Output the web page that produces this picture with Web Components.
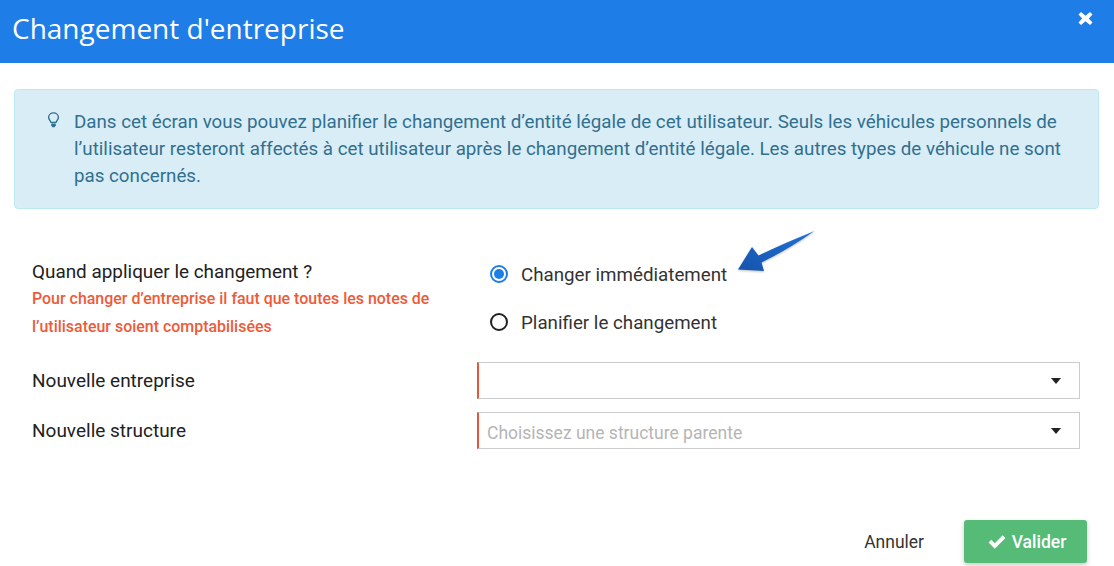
<!DOCTYPE html>
<html lang="fr">
<head>
<meta charset="utf-8">
<title>Changement d'entreprise</title>
<style>
  html, body { margin: 0; padding: 0; background: #fff; }
  body { width: 1114px; height: 566px; overflow: hidden; font-family: Roboto, "Liberation Sans", sans-serif; color: #212121; }
</style>
</head>
<body>
<company-dialog></company-dialog>

<script>
class DialogHeader extends HTMLElement {
	constructor() {
		super();
		this.attachShadow({ mode: "open" }).innerHTML = `
      <style>
        :host { display: flex; justify-content: space-between; height: 63px; background: #1e7de6; color: #fff; box-sizing: border-box; padding: 0 21px 0 12px; }
        h1 { margin: 9px 0 0; font: 400 28px/38px "Open Sans", sans-serif; }
        svg { display: block; margin-top: 11px; }
      </style>
      <h1><slot></slot></h1>
      <svg width="15" height="15" viewBox="0 0 15 15"><path d="M3 1 7.500 4.700 12 1l2.500 2.600-3.700 3.900 3.700 3.900L12 14 7.500 10.300 3 14 .5 11.400l3.700-3.900L.5 3.600z" fill="#fff"/></svg>
`;
	}
}

class InfoAlert extends HTMLElement {
	constructor() {
		super();
		this.attachShadow({ mode: "open" }).innerHTML = `
      <style>
        :host { display: flex; box-sizing: border-box; height: 120px; background: #d9edf7; border: 1px solid #bce8f1; border-radius: 4px; color: #31708f; padding: 19px 24px 0 32px; font: 400 18.75px/27px Roboto, sans-serif; }
        svg { flex: none; margin: 3px 14px 0 0; }
      </style>
      <svg width="13" height="17" viewBox="0 0 13 17" fill="none" stroke="#31708f">
        <path d="M3.900 10.400C3.600 8.600 1.600 7.600 1.600 5.200a4.900 4.300 0 0 1 9.800 0c0 2.400-2 3.400-2.300 5.200z" stroke-width="1.400"/>
        <path d="M4.200 11.400h4.600v2.200l-1.200 1.600H5.400l-1.200-1.600z" fill="#31708f" stroke="none"/>
      </svg>
      <div><slot></slot></div>
`;
	}
}

class RadioOption extends HTMLElement {
	constructor() {
		super();
		const checked = this.hasAttribute("checked");
		this.attachShadow({ mode: "open" }).innerHTML = `
      <style>
        :host { display: flex; align-items: center; height: 24px; font: 400 18.75px/24px Roboto, sans-serif; color: #333; }
        .dot { box-sizing: border-box; width: 18px; height: 18px; border-radius: 50%; border: 2px solid ${checked ? "#1e7de6" : "#212121"}; margin-right: 13px; display: flex; align-items: center; justify-content: center; }
        .dot i { width: 10px; height: 10px; border-radius: 50%; background: #1e7de6; display: ${checked ? "block" : "none"}; }
        span.text { position: relative; top: 1px; }
      </style>
      <span class="dot"><i></i></span>
      <span class="text"><slot></slot></span>
`;
	}
}

class SelectField extends HTMLElement {
	constructor() {
		super();
		this.attachShadow({ mode: "open" }).innerHTML = `
      <style>
        :host { display: flex; align-items: center; justify-content: space-between; box-sizing: border-box; width: 603px; height: 37px; border: 1px solid #ccc; border-left: 2px solid #e2563a; padding: 5px 18px 0 8px; font: 400 17.5px/24px Roboto, sans-serif; color: #b5b5b5; }
        i { width: 0; height: 0; border: 5.500px solid transparent; border-top: 6px solid #212121; border-bottom: 0; margin-top: -5px; }
      </style>
      <span><slot></slot></span>
      <i></i>
`;
	}
}

class CompanyDialog extends HTMLElement {
	constructor() {
		super();
		this.attachShadow({ mode: "open" }).innerHTML = `
      <style>
        :host { display: block; position: relative; height: 566px; }
        info-alert { margin: 26px 15px 0 14px; }
        .when { display: grid; grid-template-columns: 445px 1fr; margin: 50px 0 0 32px; height: 103px; }
        .label { font: 400 19px/24px Roboto, sans-serif; color: #212121; }
        .when .label { padding-top: 1px; font-size: 18.9px; }
        .note { margin: 1px 0 0; font: 500 15.95px/27.5px Roboto, sans-serif; color: #ee5a38; }
        .radios { display: flex; flex-direction: column; gap: 24px; padding: 3px 0 0 13px; }
        .row { display: flex; justify-content: space-between; align-items: center; margin: 0 34px 0 32px; height: 37px; }
        .row + .row { margin-top: 13px; }
        .actions { display: flex; justify-content: flex-end; align-items: center; margin: 71px 27px 0 0; gap: 40px; }
        .cancel { font: 400 17.5px/24px Roboto, sans-serif; color: #333; }
        .ok { display: flex; align-items: center; justify-content: center; gap: 6px; box-sizing: border-box; width: 123px; height: 43px; padding-left: 3px; background: #55bb77; color: #fff; border-radius: 3px; font: 500 17.5px/24px Roboto, sans-serif; box-shadow: 0 2px 5px rgba(0,0,0,.22); }
        .arrow { position: absolute; left: 735px; top: 230px; filter: drop-shadow(0 1px 1px rgba(0,0,0,.25)); }
      </style>
      <dialog-header>Changement d'entreprise</dialog-header>
      <info-alert>Dans cet écran vous pouvez planifier le changement d’entité légale de cet utilisateur. Seuls les véhicules personnels de l’utilisateur resteront affectés à cet utilisateur après le changement d’entité légale. Les autres types de véhicule ne sont pas concernés.</info-alert>
      <div class="when">
        <div>
          <div class="label">Quand appliquer le changement ?</div>
          <p class="note">Pour changer d’entreprise il faut que toutes les notes de l’utilisateur soient comptabilisées</p>
        </div>
        <div class="radios">
          <radio-option checked>Changer immédiatement</radio-option>
          <radio-option>Planifier le changement</radio-option>
        </div>
      </div>
      <div class="row"><div class="label">Nouvelle entreprise</div><select-field></select-field></div>
      <div class="row"><div class="label">Nouvelle structure</div><select-field>Choisissez une structure parente</select-field></div>
      <div class="actions">
        <span class="cancel">Annuler</span>
        <span class="ok">
          <svg width="18" height="14" viewBox="0 0 18 14"><path d="M.6 7.400 3.300 4.700 6.800 8.200 14.700.3 17.400 3 6.800 13.700z" fill="#fff"/></svg>
          Valider
        </span>
      </div>
      <svg class="arrow" width="82" height="44" viewBox="0 0 82 44">
        <defs><linearGradient id="a" x1="1" y1="0" x2="0" y2="1"><stop offset="0" stop-color="#2272d6"/><stop offset="1" stop-color="#1553ad"/></linearGradient></defs>
        <path d="M79.500 1C60 9 41 17 23.500 25.500L17 17 3 39.500 29 41 26.500 32.500Q54 19 79.500 1z" fill="url(#a)"/>
      </svg>
`;
	}
}

customElements.define("dialog-header", DialogHeader);
customElements.define("info-alert", InfoAlert);
customElements.define("radio-option", RadioOption);
customElements.define("select-field", SelectField);
customElements.define("company-dialog", CompanyDialog);
</script>
</body>
</html>
